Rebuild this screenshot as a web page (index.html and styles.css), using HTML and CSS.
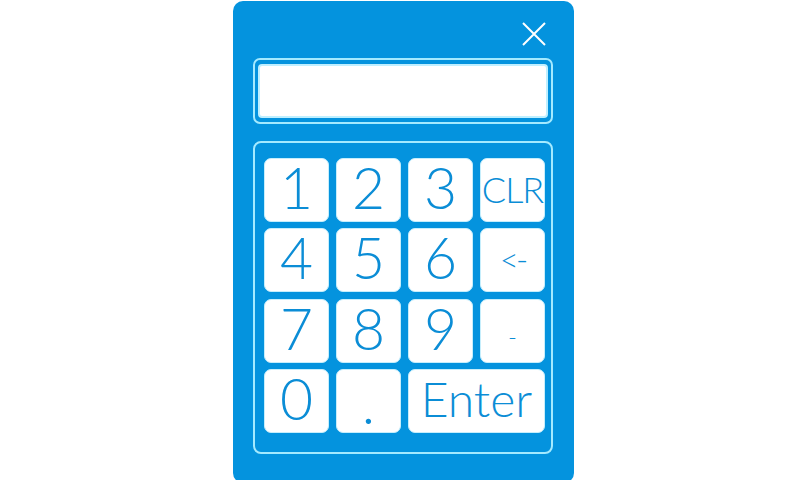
FILE: index.html
```html
<!DOCTYPE html>
<html>
<head>
<meta charset="utf-8">
<link rel="stylesheet" href="styles.css">
</head>
<body>
<div class="panel">
  <div class="header">
    <svg class="close" width="24" height="24" viewBox="0 0 24 24"><path d="M1 1 L23 23 M23 1 L1 23" stroke="#fff" stroke-width="2" fill="none"/></svg>
  </div>
  <div class="display-frame"><div class="display"></div></div>
  <div class="keypad">
    <div class="key">1</div>
    <div class="key">2</div>
    <div class="key">3</div>
    <div class="key key-clr">CLR</div>
    <div class="key">4</div>
    <div class="key">5</div>
    <div class="key">6</div>
    <div class="key key-back">&lt;-</div>
    <div class="key">7</div>
    <div class="key">8</div>
    <div class="key">9</div>
    <div class="key key-minus">-</div>
    <div class="key">0</div>
    <div class="key key-dot">.</div>
    <div class="key key-enter">Enter</div>
  </div>
</div>
</body>
</html>
```

FILE: styles.css
```css
html, body {
  margin: 0;
  padding: 0;
  background: #ffffff;
}
body {
  width: 800px;
  height: 480px;
  overflow: hidden;
  font-family: Lato, "Open Sans", sans-serif;
}
.panel {
  width: 341px;
  height: 482px;
  margin: 1px 0 0 233px;
  background: #0493de;
  border-radius: 10px;
  padding: 0 21px 0 20px;
  box-sizing: border-box;
}
.header {
  height: 57px;
  display: flex;
  justify-content: flex-end;
  align-items: flex-start;
  padding-right: 7px;
  box-sizing: border-box;
}
.close {
  margin-top: 21px;
}
.display-frame {
  height: 66px;
  border: 2px solid #a4eaff;
  border-radius: 7px;
  padding: 4px 3px;
  box-sizing: border-box;
}
.display {
  height: 100%;
  background: #ffffff;
  border: 2px solid #bfefff;
  border-radius: 4px;
  box-sizing: border-box;
}
.keypad {
  margin-top: 17px;
  height: 313px;
  border: 2px solid #a4eaff;
  border-radius: 8px;
  box-sizing: border-box;
  padding: 15px 6px 19px 9px;
  display: grid;
  grid-template-columns: repeat(4, 65px);
  grid-template-rows: repeat(4, 64px);
  column-gap: 7px;
  row-gap: 6.33px;
}
.key {
  background: #ffffff;
  border: 1.5px solid #c6eefc;
  border-radius: 7px;
  box-sizing: border-box;
  color: #0b8dd6;
  font-weight: 300;
  font-size: 57px;
  line-height: 1;
  display: flex;
  align-items: center;
  justify-content: center;
  padding-bottom: 5px;
}
.key-clr {
  font-size: 36px;
  padding-bottom: 2px;
  letter-spacing: -1px;
}
.key-back {
  font-size: 33px;
  padding-bottom: 2px;
  letter-spacing: -3px;
}
.key-minus {
  font-size: 24px;
  padding-top: 12px;
  padding-bottom: 0;
}
.key-dot {
  font-size: 57px;
  padding-top: 4px;
  padding-bottom: 0;
}
.key-enter {
  grid-column: 3 / 5;
  font-size: 48px;
  padding-bottom: 3px;
}
```
